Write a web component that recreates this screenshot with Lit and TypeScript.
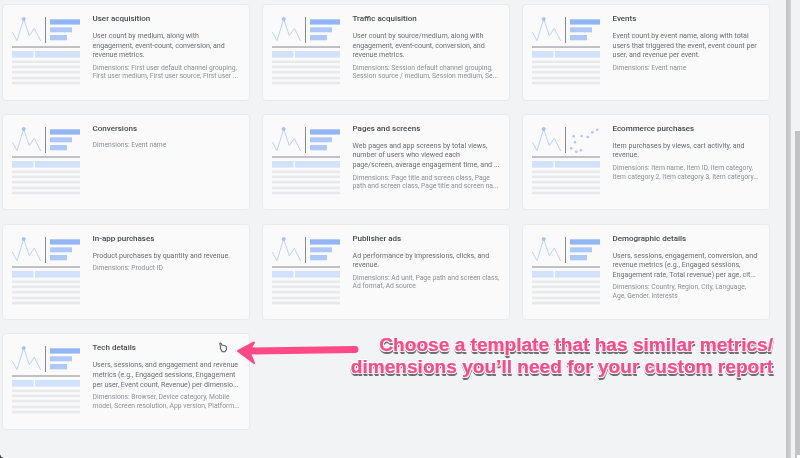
import { LitElement, html, css, svg } from "lit";
import { customElement } from "lit/decorators.js";

type Card = { t: string; d: string[]; m: string[]; scatter?: boolean };
const cards: Card[] = [
  { t: "User acquisition", d: ["User count by medium, along with", "engagement, event-count, conversion, and", "revenue metrics."], m: ["Dimensions: First user default channel grouping,", "First user medium, First user source, First user ..."] },
  { t: "Traffic acquisition", d: ["User count by source/medium, along with", "engagement, event-count, conversion, and", "revenue metrics."], m: ["Dimensions: Session default channel grouping,", "Session source / medium, Session medium, Se..."] },
  { t: "Events", d: ["Event count by event name, along with total", "users that triggered the event, event count per", "user, and revenue per event."], m: ["Dimensions: Event name"] },
  { t: "Conversions", d: [], m: ["Dimensions: Event name"] },
  { t: "Pages and screens", d: ["Web pages and app screens by total views,", "number of users who viewed each", "page/screen, average engagement time, and ..."], m: ["Dimensions: Page title and screen class, Page", "path and screen class, Page title and screen na..."] },
  { t: "Ecommerce purchases", d: ["Item purchases by views, cart activity, and", "revenue."], m: ["Dimensions: Item name, Item ID, Item category,", "Item category 2, Item category 3, Item category..."], scatter: true },
  { t: "In-app purchases", d: ["Product purchases by quantity and revenue."], m: ["Dimensions: Product ID"] },
  { t: "Publisher ads", d: ["Ad performance by impressions, clicks, and", "revenue."], m: ["Dimensions: Ad unit, Page path and screen class,", "Ad format, Ad source"] },
  { t: "Demographic details", d: ["Users, sessions, engagement, conversion, and", "revenue metrics (e.g., Engaged sessions,", "Engagement rate, Total revenue) per age, cit..."], m: ["Dimensions: Country, Region, City, Language,", "Age, Gender, Interests"] },
  { t: "Tech details", d: ["Users, sessions, and engagement and revenue", "metrics (e.g., Engaged sessions, Engagement", "per user, Event count, Revenue) per dimensio..."], m: ["Dimensions: Browser, Device category, Mobile", "model, Screen resolution, App version, Platform..."] },
];

const dots = [[41.7,9.3],[49.7,9],[55.7,10],[60.3,5.3],[65.3,2.7],[43,15.3],[39.3,21.3],[44.3,24.7],[49,23.3]];

const thumb = (scatter?: boolean) => html`<svg class="thumb" width="70" height="72" viewBox="0 0 70 72">
  <polyline points="0.3,15 5,23.7 11.7,2 17.3,18.7 22.3,11.3 28.7,24" fill="none" stroke="#bcd3f8" stroke-width="1"/>
  <circle cx="11.7" cy="2" r="1.6" fill="#a9c6f7" stroke="#8fb4f3" stroke-width=".6"/>
  <rect x="33" y="0" width="1" height="26" fill="#85888c"/>
  ${scatter
    ? dots.map(([x, y]) => svg`<circle cx=${x} cy=${y} r="1.3" fill="#a9c6f7"/>`)
    : svg`<rect x="38" y="2.3" width="30" height="5.3" fill="#92b6f5"/><rect x="38" y="10.3" width="22" height="5" fill="#aec9f9"/><rect x="38" y="18" width="17" height="5.3" fill="#aec9f9"/>`}
  <rect x="0" y="29.4" width="68" height="1.2" fill="#9a9c9f"/>
  <rect x="0" y="34" width="21.5" height="6.6" fill="#d3e2fb"/><rect x="23" y="34" width="45" height="6.6" fill="#d3e2fb"/>
  ${[43.5, 48.5, 53.8, 59.7, 64.7].map((y) => svg`<rect x="0" y=${y} width="68" height="2.6" fill="#e8e9eb"/>`)}
</svg>`;

@customElement("app-root")
export class AppRoot extends LitElement {
  static styles = css`
    :host { display: block; width: 800px; height: 458px; overflow: hidden; position: relative; background: #f1f3f4; font-family: Roboto, "Liberation Sans", sans-serif; }
    .page { height: 458px; display: flex; }
    .content { width: 786px; filter: blur(0.4px); }
    .grid { display: grid; grid-template-columns: repeat(3, 248px); column-gap: 12px; grid-auto-rows: 96.5px; row-gap: 13.3px; padding: 4px 0 0 2px; }
    .card { background: #fafafb; border: 1px solid #e9eaec; border-radius: 4px; box-sizing: border-box; display: flex; padding: 12px 8px 0 9px; }
    .thumb { flex: none; margin-right: 10.5px; display: block; overflow: visible; }
    .body { min-width: 0; white-space: nowrap; margin-top: -3px; }
    .title { font-size: 8px; font-weight: 500; color: #45494c; line-height: 10px; }
    .desc { font-size: 7.1px; color: #696d72; line-height: 9.6px; margin-top: 7px; }
    .meta { font-size: 6.75px; color: #8b9095; line-height: 8.7px; margin-top: 4px; }
    .title + .meta { margin-top: 7px; }
    .rail { width: 14px; display: flex; background: #f1f3f4; }
    .line { width: 5px; background: linear-gradient(90deg, #bfc1c3, #cdcfd1); }
    .track { margin-left: 4px; width: 4.5px; position: relative; }
    .bar { position: absolute; left: 0; right: 0; top: 131px; bottom: 0; background: #c2c3c5; }
    .note { position: absolute; right: 27px; top: 334px; text-align: right; font: bold 19.1px/22px "Liberation Sans", Arial, sans-serif; color: #ff4a86; white-space: nowrap; -webkit-text-stroke: 0.25px #ff4a86; filter: blur(0.3px); text-shadow: 1px 0 0 #fff, -1px 0 0 #fff, 0 -1px 0 #fff, 0 1px 0 #fff, 1px 1px 0 #fff, -1px -1px 0 #fff, 1px -1px 0 #fff, -1px 1px 0 #fff, 1px 2.5px 0.6px #6f6f72, 0 2.5px 0.6px #6f6f72, -1px 2px 0.6px #8f8f92; }
    .arrow { position: absolute; left: 230px; top: 335px; filter: blur(0.3px); }
    .cursor { position: absolute; left: 218px; top: 341.5px; filter: blur(0.3px); }
    .corner { position: absolute; left: 0; bottom: 0; width: 4px; height: 4px; background: radial-gradient(circle at 100% 0, transparent 3.5px, #444 4px); }
    .corner2 { position: absolute; right: 0; bottom: 0; width: 3px; height: 3px; background: #fff; }
  `;
  render() {
    return html`<div class="page">
      <div class="content"><div class="grid">
        ${cards.map((c) => html`<div class="card">${thumb(c.scatter)}<div class="body">
          <div class="title">${c.t}</div>
          ${c.d.length ? html`<div class="desc">${c.d.map((l) => html`<div>${l}</div>`)}</div>` : ""}
          <div class="meta">${c.m.map((l) => html`<div>${l}</div>`)}</div>
        </div></div>`)}
      </div></div>
      <div class="rail"><div class="line"></div><div class="track"><div class="bar"></div></div></div>
    </div>
    <svg class="arrow" width="135" height="34" viewBox="0 0 135 34">
      <path d="M15 16 L125 14.5" stroke="#ff4a86" stroke-width="7" stroke-linecap="round" fill="none"/>
      <path d="M8 16 L24 7.5 L19 16 L24 28 Z" fill="#ff4a86" stroke="#ff4a86" stroke-width="2" stroke-linejoin="round"/>
    </svg>
    <svg class="cursor" width="10" height="11" viewBox="0 0 12 14">
      <path d="M2 1.5 C3 1 4 2 4.5 4 L6 4 L10 5.5 L10.5 9.5 L8.5 12.5 L5 12.5 L2.5 8 L3 7 L2 3 Z" fill="#f4f4f4" stroke="#555" stroke-width="1.3" stroke-linejoin="round"/>
    </svg>
    <div class="note"><div>Choose a template that has similar metrics/</div><div>dimensions you’ll need for your custom report</div></div>
    <div class="corner"></div><div class="corner2"></div>`;
  }
}
